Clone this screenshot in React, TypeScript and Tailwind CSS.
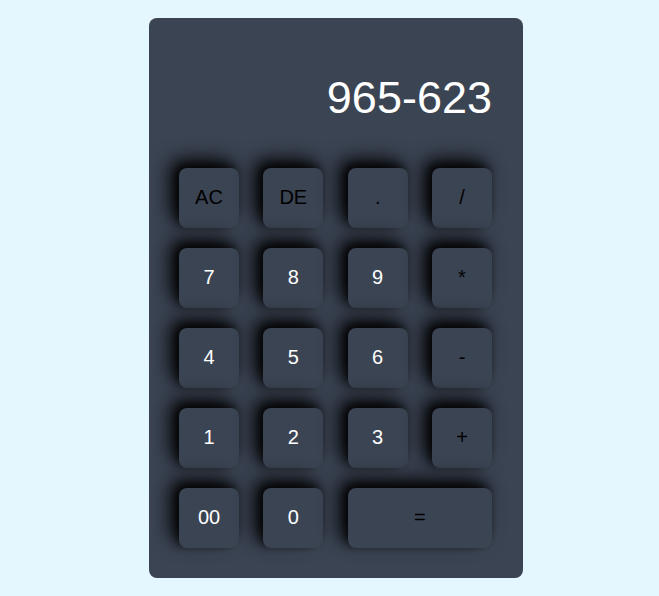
import React, { useState } from 'react';

const KEYS: { label: string; op?: boolean; wide?: boolean }[] = [
  { label: 'AC', op: true },
  { label: 'DE', op: true },
  { label: '.', op: true },
  { label: '/', op: true },
  { label: '7' },
  { label: '8' },
  { label: '9' },
  { label: '*', op: true },
  { label: '4' },
  { label: '5' },
  { label: '6' },
  { label: '-', op: true },
  { label: '1' },
  { label: '2' },
  { label: '3' },
  { label: '+', op: true },
  { label: '00' },
  { label: '0' },
  { label: '=', op: true, wide: true },
];

const App: React.FC = () => {
  const [value, setValue] = useState('965-623');

  const press = (k: string) => {
    if (k === 'AC') return setValue('');
    if (k === 'DE') return setValue(v => v.slice(0, -1));
    if (k === '=') {
      try {
        // eslint-disable-next-line no-new-func
        setValue(String(Function(`return (${value})`)()));
      } catch {
        setValue('Error');
      }
      return;
    }
    setValue(v => v + k);
  };

  return (
    <div
      className="flex h-screen items-center bg-[#e5f7fe] pl-[149px]"
      style={{ fontFamily: '"Liberation Sans", Arial, sans-serif' }}
    >
      <div className="w-[374px] h-[560px] rounded-lg bg-[#3b4453] pl-[30px] pr-[31px] pt-[30px] pb-[30px]">
        <div className="mt-[27px] h-[44px] text-right text-[45px] leading-none text-white">
          {value}
        </div>
        <div className="mt-[49px] grid grid-cols-[repeat(4,60px)] justify-between gap-y-5">
          {KEYS.map(k => (
            <button
              key={k.label}
              onClick={() => press(k.label)}
              className={`h-[60px] rounded-lg bg-[#3b4453] pb-[2px] text-xl shadow-[-8px_-8px_20px_#000,-3px_-3px_8px_rgba(0,0,0,0.7),4px_4px_12px_rgba(255,255,255,0.04)] ${
                k.op ? 'text-black' : 'text-white'
              } ${k.wide ? 'col-span-2' : ''}`}
            >
              {k.label}
            </button>
          ))}
        </div>
      </div>
    </div>
  );
};

export default App;
